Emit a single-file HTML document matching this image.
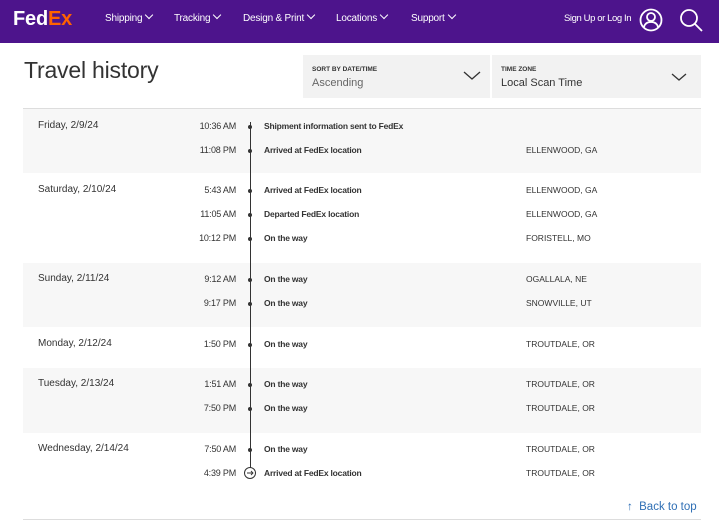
<!DOCTYPE html><html><head><style>
*{margin:0;padding:0;box-sizing:border-box}
body{width:719px;height:525px;overflow:hidden;background:#fff;font-family:"Liberation Sans",sans-serif;position:relative;color:#333}
.nav{position:absolute;left:0;top:0;width:719px;height:43px;background:#4d148c}
.nav span{position:absolute;top:13px;color:#fff;font-size:10px;letter-spacing:-0.2px}
.chev{display:inline-block;width:6px;height:6px;border-right:1px solid #fff;border-bottom:1px solid #fff;transform:rotate(45deg);margin-left:4px;position:relative;top:-3px}
.a{position:absolute;font-size:9px;white-space:nowrap}
.g{position:absolute;left:23px;width:678px;background:#f7f7f7}
.d{font-size:10px;color:#333}
.t{font-size:9px;color:#333;text-align:right;width:80px;letter-spacing:-0.2px}
.e{font-weight:bold;font-size:8.5px;color:#333;letter-spacing:-0.2px}
.dot{position:absolute;left:248px;width:4px;height:4px;border-radius:2px;background:#333}
</style></head><body>
<div class="nav">
<div style="position:absolute;left:13px;top:8px;font-size:20px;font-weight:bold;letter-spacing:-1.5px"><span style="position:static;color:#fff;font-size:20px">Fed</span><span style="position:static;color:#ff6200;font-size:20px">Ex</span></div>
<span style="left:105px">Shipping<i class="chev"></i></span>
<span style="left:174px">Tracking<i class="chev"></i></span>
<span style="left:243px">Design &amp; Print<i class="chev"></i></span>
<span style="left:336px">Locations<i class="chev"></i></span>
<span style="left:411px">Support<i class="chev"></i></span>
<span style="left:564px;font-size:9.5px;letter-spacing:-0.4px">Sign Up or Log In</span>
<svg style="position:absolute;left:639px;top:8px" width="24" height="24" viewBox="0 0 24 24" fill="none" stroke="#fff" stroke-width="1.8"><circle cx="12" cy="12" r="10.5"/><circle cx="12" cy="9" r="4"/><path d="M5 19c1-4 4-5 7-5s6 1 7 5"/></svg>
<svg style="position:absolute;left:679px;top:8px" width="24" height="26" viewBox="0 0 24 26" fill="none" stroke="#fff" stroke-width="1.8"><circle cx="10" cy="10" r="8"/><path d="M16 16l7 7"/></svg>
</div>
<div style="position:absolute;left:24px;top:57px;font-size:23px;color:#333;letter-spacing:-0.2px">Travel history</div>
<div style="position:absolute;left:303px;top:55px;width:187px;height:43px;background:#f2f2f2"><div style="position:absolute;left:9px;top:11px;font-size:6.5px;font-weight:bold">SORT BY DATE/TIME</div><div style="position:absolute;left:9px;top:22px;font-size:11px;color:#666">Ascending</div><svg style="position:absolute;left:160px;top:16px" width="18" height="10"><path d="M1 1l8 7 8-7" fill="none" stroke="#333" stroke-width="1.3"/></svg></div>
<div style="position:absolute;left:492px;top:55px;width:209px;height:43px;background:#f2f2f2"><div style="position:absolute;left:9px;top:11px;font-size:6.5px;font-weight:bold">TIME ZONE</div><div style="position:absolute;left:9px;top:22px;font-size:11px;color:#333">Local Scan Time</div><svg style="position:absolute;left:179px;top:18px" width="16" height="9"><path d="M1 1l7 6 7-6" fill="none" stroke="#333" stroke-width="1.3"/></svg></div>
<div style="position:absolute;left:23px;top:108px;width:678px;height:1px;background:#ddd"></div>
<div class="g" style="top:109px;height:64px"></div>
<div class="g" style="top:263px;height:64px"></div>
<div class="g" style="top:368px;height:65px"></div>
<div style="position:absolute;left:249.5px;top:122px;width:1.5px;height:348px;background:#333"></div>
<div class="a d" style="left:38px;top:120px">Friday, 2/9/24</div>
<div class="a d" style="left:38px;top:184px">Saturday, 2/10/24</div>
<div class="a d" style="left:38px;top:273px">Sunday, 2/11/24</div>
<div class="a d" style="left:38px;top:338px">Monday, 2/12/24</div>
<div class="a d" style="left:38px;top:378px">Tuesday, 2/13/24</div>
<div class="a d" style="left:38px;top:443px">Wednesday, 2/14/24</div>
<div style="position:absolute;left:0;top:0">
<div class="a t" style="left:156px;top:121px">10:36 AM</div><div class="dot" style="top:125px"></div><div class="a e" style="left:264px;top:121px">Shipment information sent to FedEx</div>
<div class="a t" style="left:156px;top:145px">11:08 PM</div><div class="dot" style="top:149px"></div><div class="a e" style="left:264px;top:145px">Arrived at FedEx location</div><div class="a" style="left:526px;top:145px;font-size:8.5px">ELLENWOOD, GA</div>
<div class="a t" style="left:156px;top:185px">5:43 AM</div><div class="dot" style="top:189px"></div><div class="a e" style="left:264px;top:185px">Arrived at FedEx location</div><div class="a" style="left:526px;top:185px;font-size:8.5px">ELLENWOOD, GA</div>
<div class="a t" style="left:156px;top:209px">11:05 AM</div><div class="dot" style="top:213px"></div><div class="a e" style="left:264px;top:209px">Departed FedEx location</div><div class="a" style="left:526px;top:209px;font-size:8.5px">ELLENWOOD, GA</div>
<div class="a t" style="left:156px;top:233px">10:12 PM</div><div class="dot" style="top:237px"></div><div class="a e" style="left:264px;top:233px">On the way</div><div class="a" style="left:526px;top:233px;font-size:8.5px">FORISTELL, MO</div>
<div class="a t" style="left:156px;top:274px">9:12 AM</div><div class="dot" style="top:278px"></div><div class="a e" style="left:264px;top:274px">On the way</div><div class="a" style="left:526px;top:274px;font-size:8.5px">OGALLALA, NE</div>
<div class="a t" style="left:156px;top:298px">9:17 PM</div><div class="dot" style="top:302px"></div><div class="a e" style="left:264px;top:298px">On the way</div><div class="a" style="left:526px;top:298px;font-size:8.5px">SNOWVILLE, UT</div>
<div class="a t" style="left:156px;top:339px">1:50 PM</div><div class="dot" style="top:343px"></div><div class="a e" style="left:264px;top:339px">On the way</div><div class="a" style="left:526px;top:339px;font-size:8.5px">TROUTDALE, OR</div>
<div class="a t" style="left:156px;top:379px">1:51 AM</div><div class="dot" style="top:383px"></div><div class="a e" style="left:264px;top:379px">On the way</div><div class="a" style="left:526px;top:379px;font-size:8.5px">TROUTDALE, OR</div>
<div class="a t" style="left:156px;top:403px">7:50 PM</div><div class="dot" style="top:407px"></div><div class="a e" style="left:264px;top:403px">On the way</div><div class="a" style="left:526px;top:403px;font-size:8.5px">TROUTDALE, OR</div>
<div class="a t" style="left:156px;top:444px">7:50 AM</div><div class="dot" style="top:448px"></div><div class="a e" style="left:264px;top:444px">On the way</div><div class="a" style="left:526px;top:444px;font-size:8.5px">TROUTDALE, OR</div>
<div class="a t" style="left:156px;top:468px">4:39 PM</div><div class="a e" style="left:264px;top:468px">Arrived at FedEx location</div><div class="a" style="left:526px;top:468px;font-size:8.5px">TROUTDALE, OR</div>
</div>
<svg style="position:absolute;left:243px;top:466px" width="14" height="14" viewBox="0 0 14 14"><circle cx="7" cy="7" r="5.5" fill="#fff" stroke="#333" stroke-width="1"/><path d="M4 7h6M8 5l2 2-2 2" fill="none" stroke="#333" stroke-width="0.9"/></svg>
<div class="a" style="left:627px;top:501px;font-size:11.5px;color:#2f6fb5">&#8593;&nbsp; Back to top</div>
<div style="position:absolute;left:23px;top:519px;width:678px;height:1px;background:#ddd"></div>
</body></html>
